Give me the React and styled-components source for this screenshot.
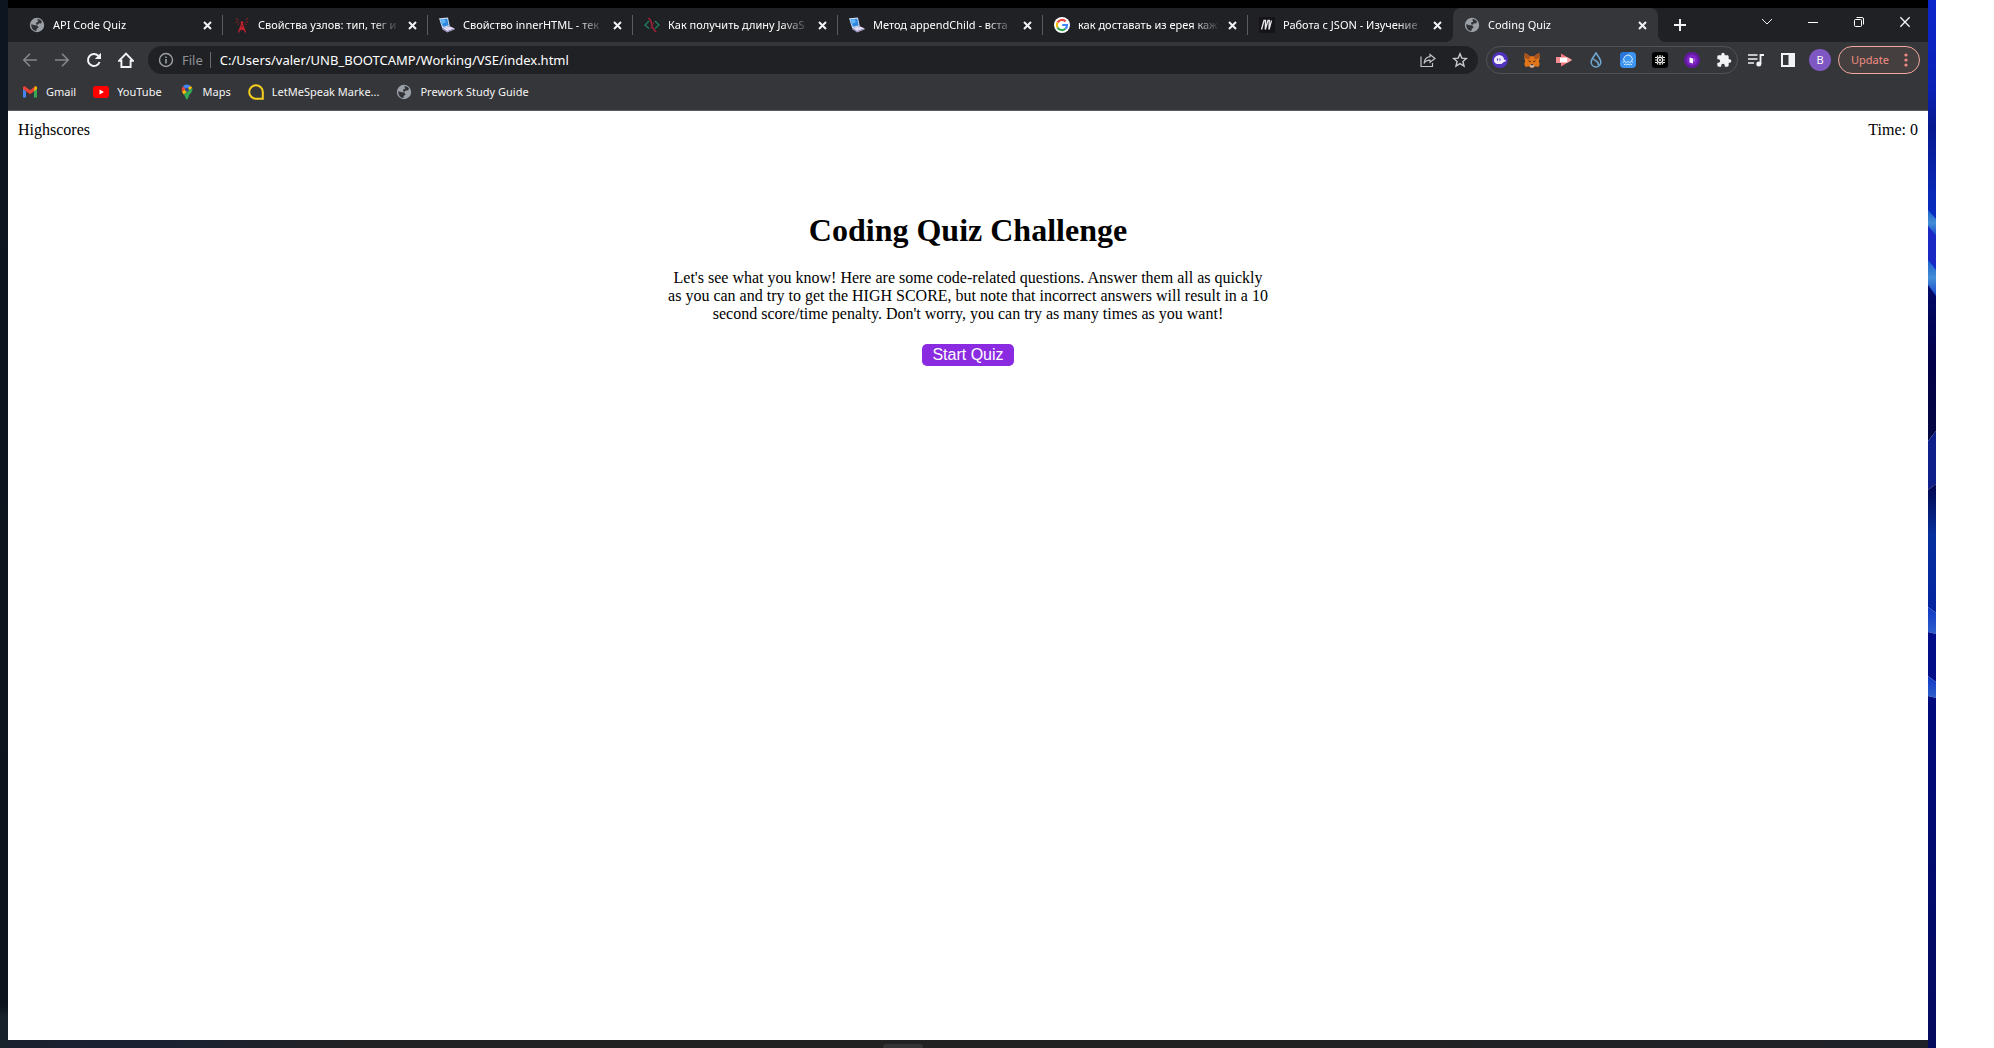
import React from "react";
import styled, { createGlobalStyle } from "styled-components";

const uiFont = `"Segoe UI", "Noto Sans", "Open Sans", sans-serif`;
const pageFont = `"Times New Roman", "Liberation Serif", serif`;

const GlobalStyle = createGlobalStyle`
  *, *::before, *::after { box-sizing: border-box; }
  body { margin: 0; background: #fff; }
  svg { display: block; flex: none; }
`;

const Screen = styled.div`
  display: grid;
  grid-template-columns: minmax(0, 1fr) 8px;
  min-height: 100vh;
  padding-right: 58px;
  background: #fff;
`;

const Desktop = styled.div`
  display: flex;
  flex-direction: column;
  padding: 8px 0 0 8px;
  background:
    linear-gradient(#000, #000) 8px 0 / 100% 8px no-repeat,
    linear-gradient(#0d1520, #0c131d 96%, #18222b 97%, #18222b);
`;

const WallpaperEdge = styled.svg`
  width: 8px;
  height: 100%;
`;

const Window = styled.div`
  flex: 1;
  display: flex;
  flex-direction: column;
  background: #fff;
`;

const Taskbar = styled.div`
  height: 8px;
  display: flex;
  justify-content: center;
  align-items: flex-end;
  padding-right: 130px;
  background: linear-gradient(90deg, #1b202e, #1a2232 8%, #222224 18%, #232222 60%, #1f2229);
`;

const TaskbarItem = styled.div`
  width: 40px;
  height: 4px;
  border-radius: 3px 3px 0 0;
  background: #333435;
`;

/* Tab strip */
const TabStrip = styled.div`
  display: flex;
  height: 34px;
  padding-left: 10px;
  background: #202124;
  font-family: ${uiFont};
`;

const TabList = styled.div`
  flex: 0 1 1640px;
  min-width: 0;
  display: grid;
  grid-template-columns: repeat(8, minmax(0, 1fr));
`;

const Tab = styled.div`
  display: flex;
  align-items: center;
  position: relative;
  min-width: 0;
  padding: 0 8px 0 11px;
  border-radius: 8px 8px 0 0;
  color: #fff;
  background: ${(p) => (p.$active ? "#35363a" : "transparent")};

  ${(p) =>
    p.$active &&
    `
    &::before, &::after {
      content: "";
      position: absolute;
      bottom: 0;
      width: 8px;
      height: 8px;
    }
    &::before { right: 100%; background: radial-gradient(circle at 0 0, transparent 8px, #35363a 8px); }
    &::after { left: 100%; background: radial-gradient(circle at 100% 0, transparent 8px, #35363a 8px); }
  `}

  ${(p) =>
    p.$divider &&
    `
    &::after {
      content: "";
      position: absolute;
      right: 0;
      top: 7px;
      width: 1px;
      height: 20px;
      background: #5b5c60;
    }
  `}
`;

const TabTitle = styled.span`
  flex: 1;
  min-width: 0;
  margin: 0 4px 0 8px;
  overflow: hidden;
  white-space: nowrap;
  font-size: 11px;
  line-height: 18px;
  mask-image: linear-gradient(90deg, #000 calc(100% - 28px), transparent);
`;

const IconButton = styled.button`
  display: flex;
  align-items: center;
  justify-content: center;
  width: ${(p) => p.$w || 32}px;
  height: ${(p) => p.$h || 28}px;
  flex: none;
  padding: 0;
  border: 0;
  background: none;
  color: ${(p) => p.$color || "#f1f3f4"};
`;

const WindowControls = styled.div`
  display: flex;
  margin-left: auto;
`;

/* Toolbar */
const Toolbar = styled.div`
  display: flex;
  align-items: center;
  gap: 2px;
  height: 36px;
  padding: 0 8px 0 6px;
  background: #35363a;
  font-family: ${uiFont};
`;

const NavButtons = styled.nav`
  display: flex;
  margin-right: 4px;
`;

const ToolbarActions = styled.div`
  display: flex;
`;

const Omnibox = styled.form`
  flex: 1;
  min-width: 0;
  display: flex;
  align-items: center;
  height: 28px;
  margin-right: 6px;
  padding: 0 2px 0 10px;
  border-radius: 14px;
  background: #202124;
`;

const Scheme = styled.label`
  margin-left: 8px;
  padding-right: 7px;
  border-right: 1px solid #6a6b6f;
  color: #8e9196;
  font-size: 13px;
  line-height: 16px;
`;

const Address = styled.input`
  flex: 1;
  min-width: 0;
  padding: 0 0 0 9px;
  border: 0;
  outline: 0;
  background: none;
  color: #fff;
  font-family: ${uiFont};
  font-size: 13px;
  line-height: 20px;
`;

const Extensions = styled.div`
  display: flex;
  align-items: center;
  gap: 16px;
  height: 28px;
  padding: 0 5px;
  border: 1px solid #505256;
  border-radius: 14px;
`;

const Avatar = styled.span`
  display: grid;
  place-items: center;
  width: 22px;
  height: 22px;
  border-radius: 50%;
  background: #7e57c2;
  color: #fff;
  font-family: ${uiFont};
  font-size: 11px;
  line-height: 16px;
`;

const UpdateButton = styled.button`
  display: flex;
  align-items: center;
  justify-content: space-between;
  width: 82px;
  height: 28px;
  padding: 0 11px 0 12px;
  border: 1px solid #f2a8a0;
  border-radius: 14px;
  background: #45403f;
  color: #f28b82;
  font-family: ${uiFont};
  font-size: 11px;
  line-height: 16px;
`;

/* Bookmarks */
const Bookmarks = styled.nav`
  display: flex;
  align-items: center;
  gap: 17px;
  height: 33px;
  padding: 0 14px 4px;
  border-bottom: 1px solid #5a5b5e;
  background: #35363a;
  font-family: ${uiFont};
`;

const Bookmark = styled.a`
  display: flex;
  align-items: center;
  gap: 8px;
  color: #f5f5f5;
  font-size: 11px;
  line-height: 18px;
  text-decoration: none;
  white-space: nowrap;
`;

/* Quiz page */
const QuizPage = styled.div`
  flex: 1;
  padding: 10px;
  color: #000;
  font-family: ${pageFont};
  font-size: 16px;
  line-height: 18px;
`;

const ScoreBar = styled.header`
  display: flex;
  justify-content: space-between;
`;

const ScoreLink = styled.a`
  color: #000;
  text-decoration: none;
`;

const Intro = styled.main`
  max-width: 600px;
  margin: 73px auto 0;
  text-align: center;
`;

const Title = styled.h1`
  margin: 0 0 21px;
  font-size: 32px;
  line-height: 36px;
`;

const Lead = styled.p`
  margin: 0 0 21px;
`;

const StartButton = styled.button`
  padding: 2px 10px;
  border: 0;
  border-radius: 5px;
  background: #8a2be2;
  color: #fff;
  font-family: Arial, "Liberation Sans", sans-serif;
  font-size: 16px;
  line-height: 18px;
`;

const Svg = ({ s = 16, h = s, vb = 16, children, ...rest }) => (
  <svg width={s} height={h} viewBox={`0 0 ${vb} ${vb}`} fill="none" aria-hidden="true" {...rest}>
    {children}
  </svg>
);

const Globe = () => (
  <Svg>
    <circle cx="8" cy="8" r="7.2" fill="#9aa0a6" />
    <path d="M2.200 7.200 6 8.200l2.400.4 1.200 2-1.800 1.200-.4 2.200C4.600 13.800 2.200 11.400 2.200 7.200ZM8.300 2.100c2 .1 3.700 1.100 4.700 2.700l-1 1.800-2.200-.4-.9 1.500-2-.5.6-1.900 1.700-.6Z" fill="#303236" />
  </Svg>
);

const Tower = () => (
  <Svg stroke="#c4202c">
    <path d="m8 6-3.500 9.500M8 6l3.500 9.500M6.300 10.500h3.400M5.600 13l4.600-2.200M5.800 10.800l4.800 2.400" strokeWidth="1.300" />
    <path d="M6.800 5.800h2.400M4.500 3 2 1.500M4.200 5H1.800M11.500 3 14 1.500M11.800 5h2.400M5 6.500 3.500 8M11 6.500 12.500 8" opacity=".75" />
    <circle cx="8" cy="5.500" r="1.300" fill="#c4202c" stroke="none" />
  </Svg>
);

const Laptop = () => (
  <Svg>
    <path d="m0 1.300 9-.8 1.800 8.700-7.600 2Z" fill="#c5d8f4" />
    <path d="m1.300 2.400 6.900-.6 1.400 6.500-5.600 1.500Z" fill="#2f86de" />
    <path d="m1.300 2.400 4.400-.4 1.300 3.300-4.700 1.900Z" fill="#62b4f4" />
    <path d="m3.200 11 7.600-1.800 4.900 2.300-7.500 2.700Z" fill="#e1dcf5" />
    <path d="m3.200 11 5 3.200 7.500-2.700v1.100L8.200 15.500l-5-3.300Z" fill="#a49bcb" />
  </Svg>
);

const CodeMark = () => (
  <Svg strokeWidth="1.500">
    <path d="M5 4 1 8l4 3.500M11 4l4 4-4 3.500" stroke="#237a58" />
    <path d="M4.500 1 7 4l1.500 7 3.500 4" stroke="#a32237" />
    <path d="M10 5 6.500 11.500" stroke="#7c2434" strokeWidth="1" />
  </Svg>
);

const Google = () => (
  <Svg>
    <circle cx="8" cy="8" r="8" fill="#fff" />
    <g strokeWidth="2.200">
      <path d="M11.600 4.400A5.100 5.100 0 0 0 3.500 5.600" stroke="#ea4335" />
      <path d="M3.500 5.600a5.100 5.100 0 0 0 0 4.800" stroke="#fbbc05" />
      <path d="M3.500 10.400a5.100 5.100 0 0 0 7.900 1.400" stroke="#34a853" />
      <path d="M11.400 11.800A4.800 4.800 0 0 0 13 8H8.200" stroke="#4285f4" />
    </g>
  </Svg>
);

const MozillaDocs = () => (
  <Svg>
    <rect width="16" height="16" rx="1" fill="#151519" />
    <path d="M2.500 12.500 5 3.500h1.500l-.2 9M6.300 12.500 9 3.500h1.300l-.3 9M10 12.500l2.500-9" stroke="#e8e8ea" strokeWidth="1.300" />
  </Svg>
);

const Cross = ({ s = 9, w = 2 }) => (
  <Svg s={s} vb={9} stroke="#f1f3f4" strokeWidth={w}>
    <path d="m1 1 7 7M8 1 1 8" />
  </Svg>
);

const Gmail = () => (
  <Svg>
    <path d="M1 4.500v9h3V7.200Z" fill="#4285f4" />
    <path d="M12 13.500h3v-9l-3 2.700Z" fill="#34a853" />
    <path d="M12 3.400v3.800l3-2.200V3.800c0-1.400-1.600-2-2.500-1Z" fill="#fbbc04" />
    <path d="M1 5v-1.200c0-1.400 1.500-2 2.500-1L8 6.200l4.500-3.400-.5 4.400-4 3-4-3Z" fill="#ea4335" />
  </Svg>
);

const YouTube = () => (
  <Svg>
    <rect y="2" width="16" height="12" rx="3" fill="#f00" />
    <path d="m6.500 5.500 4.500 2.500-4.500 2.500Z" fill="#fff" />
  </Svg>
);

const MapsPin = () => (
  <Svg>
    <path d="M8 .5a5.500 5.500 0 0 0-4.300 2L8 6l3.800-4A5.500 5.500 0 0 0 8 .5Z" fill="#4285f4" />
    <path d="M3.700 2.500a5.500 5.500 0 0 0-.7 5.300L8 6Z" fill="#ea4335" />
    <path d="M3 7.800c.4 1 1 1.700 1.700 2.600L13.200 4a5 5 0 0 0-1.400-2Z" fill="#fbbc04" />
    <path d="M13.200 4c1 3.400-1.800 5.400-3 7.300-.8 1.300-1.100 4.200-2.200 4.200-1.200 0-1.400-3.300-3.300-5.100Z" fill="#34a853" />
    <circle cx="8" cy="5.800" r="2" fill="#274c87" />
  </Svg>
);

const LetMeSpeak = () => (
  <Svg>
    <path d="M8 1.200a6.800 6.800 0 1 0 0 13.600h6.800V8A6.800 6.800 0 0 0 8 1.200Z" stroke="#f5cf1d" strokeWidth="2" />
  </Svg>
);

const Ghost = () => (
  <Svg>
    <circle cx="8" cy="8" r="8" fill="#5133bd" />
    <path d="M2 9c-.3-3.200 2-5.700 5.200-5.700 3.300 0 4.800 2.300 4.800 4.200.9.300 2 .6 2 1.200 0 .8-1.300.8-2.200 1.300-1.200.8-1.700 2.300-4 2.100C4.300 12.300 2.200 11.200 2 9Z" fill="#f3effe" />
    <path d="M5.500 6.500v2M8 6.500v2" stroke="#4a2db5" strokeWidth="1.100" />
  </Svg>
);

const Fox = () => (
  <Svg>
    <path d="m.8.800 5.400 3.400h3.600L15.200.8l.5 5.200-.9 3 .9 3-1.200 3-3.300-.7L9.500 15.500h-3l-1.700-1.200-3.300.7-1.200-3 .9-3-.9-3Z" fill="#e2761b" />
    <path d="m.8.800 5.400 3.400L5 7.500.4 6ZM15.200.8 9.800 4.200 11 7.500 15.600 6Z" fill="#a85320" />
    <path d="m3.500 8.500 3 .5.300 1.500ZM12.500 8.500l-3 .5-.3 1.500Z" fill="#3b241a" />
    <path d="m6.400 12.300h3.200l.5 2-1 1.200H6.900l-1-1.200Z" fill="#d5bfb2" />
    <path d="M6.900 12.300h2.200l.4 1h-3Z" fill="#24150f" />
  </Svg>
);

const PinkArrow = () => (
  <Svg>
    <path d="M0 5h5v6H0Z" fill="#f48d91" />
    <path d="m5 1.500 11 6.500-11 6.500Z" fill="#f6767d" />
    <path d="M4 5.500h7.500v5H4Z" fill="#fff" />
    <path d="m11.500 5.300 4.500 2.700-4.500 2.700Z" fill="#f9a6a8" />
  </Svg>
);

const Droplet = () => (
  <Svg stroke="#6fa9d2" strokeWidth="1.500">
    <path d="M8 1C6.200 4 3.200 7 3.200 10.200a4.800 4.800 0 0 0 9.600 0C12.800 7 9.800 4 8 1Z" />
    <path d="M5.300 6.600c.7 2.500 6 2 5 6.600" />
  </Svg>
);

const Wave = () => (
  <Svg>
    <rect width="16" height="16" rx="4" fill="#3b95ee" />
    <path d="M0 4a4 4 0 0 1 4-4h6L0 10Z" fill="#2876dc" />
    <path d="M4.300 9.500a4.300 4.300 0 1 1 7.400 0M3 10.500l1.700-1 1.600 1 1.700-1 1.700 1 1.600-1 1.700 1M4 12.800l1.300-.8 1.400.8L8 12l1.300.8 1.400-.8 1.300.8" stroke="#d9eeff" />
  </Svg>
);

const Chip = () => (
  <Svg>
    <rect width="16" height="16" rx="3" fill="#000" />
    <g stroke="#f2f2f2" strokeWidth="1.100">
      <circle cx="8" cy="8" r="2.600" />
      <path d="M8 3v2M8 11v2M3 8h2M11 8h2M3 5.500h2l1-2M13 5.500h-2l-1-2M3 10.500h2l1 2M13 10.500h-2l-1 2" />
    </g>
    <circle cx="8" cy="8" r="1" fill="#fff" />
  </Svg>
);

const PurpleOrb = () => (
  <Svg>
    <circle cx="8" cy="8" r="8" fill="#641aa0" />
    <circle cx="8" cy="8" r="5.500" fill="#7d22c3" />
    <path d="M5.500 5.500 9 6.500v5l-3.500-1Z" fill="#fff" />
    <path d="M9.500 6.500h1.300v3H9.500Z" fill="#b879de" />
  </Svg>
);

const Puzzle = () => (
  <Svg vb={24}>
    <path fill="#f1f3f4" d="M20.500 11H19V7c0-1.100-.9-2-2-2h-4V3.500a2.500 2.500 0 0 0-5 0V5H4c-1.100 0-2 .9-2 2v3.800h1.500a2.700 2.700 0 0 1 0 5.400H2V20c0 1.100.9 2 2 2h3.800v-1.500a2.700 2.700 0 0 1 5.400 0V22H17c1.100 0 2-.9 2-2v-4h1.500a2.500 2.500 0 0 0 0-5Z" />
  </Svg>
);

const tabs = [
  { icon: <Globe />, title: "API Code Quiz", divider: true },
  { icon: <Tower />, title: "Свойства узлов: тип, тег и", divider: true },
  { icon: <Laptop />, title: "Свойство innerHTML - тек", divider: true },
  { icon: <CodeMark />, title: "Как получить длину JavaS", divider: true },
  { icon: <Laptop />, title: "Метод appendChild - вста", divider: true },
  { icon: <Google />, title: "как доставать из ерея каж", divider: true },
  { icon: <MozillaDocs />, title: "Работа с JSON - Изучение" },
  { icon: <Globe />, title: "Coding Quiz", active: true },
];

const bookmarks = [
  { icon: <Gmail />, label: "Gmail" },
  { icon: <YouTube />, label: "YouTube" },
  { icon: <MapsPin />, label: "Maps" },
  { icon: <LetMeSpeak />, label: "LetMeSpeak Marke..." },
  { icon: <Globe />, label: "Prework Study Guide" },
];

const Wallpaper = () => (
  <WallpaperEdge viewBox="0 0 8 1048" preserveAspectRatio="none" aria-hidden="true">
    <defs>
      <linearGradient id="sky" x1="0" y1="0" x2="0" y2="1">
        <stop offset="0" stopColor="#0b26cc" />
        <stop offset=".3" stopColor="#0a20b4" />
        <stop offset=".42" stopColor="#07198f" />
        <stop offset=".75" stopColor="#0a30c8" />
        <stop offset="1" stopColor="#1230d0" />
      </linearGradient>
      <linearGradient id="ray" x1="0" y1="0" x2="0" y2="1">
        <stop offset="0" stopColor="#2060cc" />
        <stop offset=".5" stopColor="#438fd6" />
        <stop offset="1" stopColor="#1c46cc" />
      </linearGradient>
      <linearGradient id="deep" x1="0" y1="0" x2="0" y2="1">
        <stop offset="0" stopColor="#020a68" />
        <stop offset=".5" stopColor="#020048" />
        <stop offset="1" stopColor="#040842" />
      </linearGradient>
      <linearGradient id="mid" x1="0" y1="0" x2="0" y2="1">
        <stop offset="0" stopColor="#03074e" />
        <stop offset=".4" stopColor="#06309e" />
        <stop offset="1" stopColor="#0424a0" />
      </linearGradient>
      <linearGradient id="glow" x1="0" y1="0" x2="0" y2="1">
        <stop offset="0" stopColor="#1038c4" />
        <stop offset="1" stopColor="#2f60cc" />
      </linearGradient>
      <linearGradient id="base" x1="0" y1="0" x2="0" y2="1">
        <stop offset="0" stopColor="#000a7c" />
        <stop offset="1" stopColor="#050c5e" />
      </linearGradient>
    </defs>
    <rect width="8" height="300" fill="url(#sky)" />
    <path d="M0 210 8 219v17L0 226Z" fill="url(#ray)" />
    <path d="M0 226 8 236v30L0 260Z" fill="#1a28c4" />
    <path d="M0 260 8 270v26L0 285Z" fill="url(#ray)" />
    <path d="M0 285 8 296V431L0 441Z" fill="url(#deep)" />
    <path d="M0 441 8 431v53L0 490Z" fill="#10208a" />
    <path d="M0 490 8 484V613L0 607Z" fill="url(#mid)" />
    <path d="M0 607 8 613v21L0 632Z" fill="url(#glow)" />
    <path d="M0 632 8 634V682L0 676Z" fill="#020e88" />
    <path d="M0 676 8 682v16L0 696Z" fill="url(#glow)" />
    <path d="M0 696 8 698V1048H0Z" fill="url(#base)" />
  </WallpaperEdge>
);

export default function App() {
  return (
    <>
      <GlobalStyle />
      <Screen>
        <Desktop>
          <Window>
            <TabStrip>
              <TabList>
                {tabs.map((t) => (
                  <Tab key={t.title} $active={t.active} $divider={t.divider}>
                    {t.icon}
                    <TabTitle>{t.title}</TabTitle>
                    <IconButton $w={16} $h={16} aria-label={`Close ${t.title}`}>
                      <Cross />
                    </IconButton>
                  </Tab>
                ))}
              </TabList>
              <IconButton $w={44} $h={34} aria-label="New tab">
                <Svg s={12} vb={12} stroke="#f1f3f4" strokeWidth="2">
                  <path d="M6 0v12M0 6h12" />
                </Svg>
              </IconButton>
              <WindowControls>
                <IconButton $w={46} aria-label="Search tabs">
                  <Svg s={12} vb={12} stroke="#f1f3f4">
                    <path d="m1 3 5 5 5-5" />
                  </Svg>
                </IconButton>
                <IconButton $w={46} aria-label="Minimize">
                  <Svg s={10} vb={10} stroke="#fff">
                    <path d="M0 5.500h10" />
                  </Svg>
                </IconButton>
                <IconButton $w={46} aria-label="Restore">
                  <Svg s={10} vb={10} stroke="#fff">
                    <rect x=".5" y="2.500" width="7" height="7" rx="1" />
                    <path d="M2.500.5H8A1.500 1.500 0 0 1 9.500 2v5.500" />
                  </Svg>
                </IconButton>
                <IconButton $w={46} aria-label="Close">
                  <Cross s={12} w={1} />
                </IconButton>
              </WindowControls>
            </TabStrip>

            <Toolbar>
              <NavButtons aria-label="Navigation">
                <IconButton $color="#85878a" aria-label="Back">
                  <Svg stroke="currentColor" strokeWidth="1.600">
                    <path d="M15 8H2M8 1.800 1.800 8 8 14.200" />
                  </Svg>
                </IconButton>
                <IconButton $color="#85878a" aria-label="Forward">
                  <Svg stroke="currentColor" strokeWidth="1.600">
                    <path d="M1 8h13M8 1.800 14.200 8 8 14.200" />
                  </Svg>
                </IconButton>
                <IconButton aria-label="Reload">
                  <Svg>
                    <path d="M13.600 10A6 6 0 1 1 12.300 3.800L14 5.500" stroke="currentColor" strokeWidth="2" />
                    <path d="M15 .8V7H8.800Z" fill="currentColor" />
                  </Svg>
                </IconButton>
                <IconButton aria-label="Home">
                  <Svg stroke="currentColor" strokeWidth="1.900">
                    <path d="M1 8.800h2.400V15h9.200V8.800H15L8 1.600Z" />
                  </Svg>
                </IconButton>
              </NavButtons>
              <Omnibox onSubmit={(e) => e.preventDefault()}>
                <Svg stroke="#9aa0a6" strokeWidth="1.400">
                  <circle cx="8" cy="8" r="6.500" />
                  <path d="M8 7v4.500M8 4.500V6" strokeWidth="1.600" />
                </Svg>
                <Scheme htmlFor="address">File</Scheme>
                <Address id="address" defaultValue="C:/Users/valer/UNB_BOOTCAMP/Working/VSE/index.html" />
                <IconButton type="button" $color="#c0c2c5" aria-label="Share">
                  <Svg stroke="currentColor" strokeWidth="1.200">
                    <path d="M1 4.500v10h11.500V11" />
                    <path d="M10 2.500 15 6.500 10 10.300V8.200C7 8.200 5 9.200 4 11.500 4.300 7.500 6.500 5 10 4.600Z" />
                  </Svg>
                </IconButton>
                <IconButton type="button" $color="#c8cacd" aria-label="Bookmark this page">
                  <Svg stroke="currentColor" strokeWidth="1.400">
                    <path d="m8 1.800 1.800 4.300 4.600.4L10.900 9.500l1.100 4.600L8 11.600l-4 2.500 1.100-4.600L1.600 6.500l4.600-.4Z" />
                  </Svg>
                </IconButton>
              </Omnibox>
              <Extensions>
                <Ghost />
                <Fox />
                <PinkArrow />
                <Droplet />
                <Wave />
                <Chip />
                <PurpleOrb />
                <Puzzle />
              </Extensions>
              <ToolbarActions>
                <IconButton aria-label="Media controls">
                  <Svg>
                    <path d="M0 3h9.500M0 7h9.500M0 11h6" stroke="currentColor" strokeWidth="1.600" />
                    <path d="M12.500 12V3H16" stroke="currentColor" strokeWidth="1.800" />
                    <circle cx="10.800" cy="12" r="2.500" fill="currentColor" />
                  </Svg>
                </IconButton>
                <IconButton aria-label="Side panel">
                  <Svg>
                    <path fillRule="evenodd" d="M1 1h14v14H1Zm2 2v10h5.500V3Z" fill="currentColor" />
                  </Svg>
                </IconButton>
                <IconButton aria-label="Profile">
                  <Avatar>B</Avatar>
                </IconButton>
              </ToolbarActions>
              <UpdateButton>
                Update
                <Svg s={4} h={14} viewBox="0 0 4 14">
                  <circle cx="2" cy="2" r="1.600" fill="#f28b82" />
                  <circle cx="2" cy="7" r="1.600" fill="#f28b82" />
                  <circle cx="2" cy="12" r="1.600" fill="#f28b82" />
                </Svg>
              </UpdateButton>
            </Toolbar>

            <Bookmarks aria-label="Bookmarks">
              {bookmarks.map((b) => (
                <Bookmark key={b.label} href="#">
                  {b.icon}
                  {b.label}
                </Bookmark>
              ))}
            </Bookmarks>

            <QuizPage>
              <ScoreBar>
                <ScoreLink href="#">Highscores</ScoreLink>
                <span>Time: 0</span>
              </ScoreBar>
              <Intro>
                <Title>Coding Quiz Challenge</Title>
                <Lead>
                  Let's see what you know! Here are some code-related questions. Answer them all as quickly as you
                  can and try to get the HIGH SCORE, but note that incorrect answers will result in a 10 second
                  score/time penalty. Don't worry, you can try as many times as you want!
                </Lead>
                <StartButton>Start Quiz</StartButton>
              </Intro>
            </QuizPage>
          </Window>
          <Taskbar>
            <TaskbarItem />
          </Taskbar>
        </Desktop>
        <Wallpaper />
      </Screen>
    </>
  );
}
